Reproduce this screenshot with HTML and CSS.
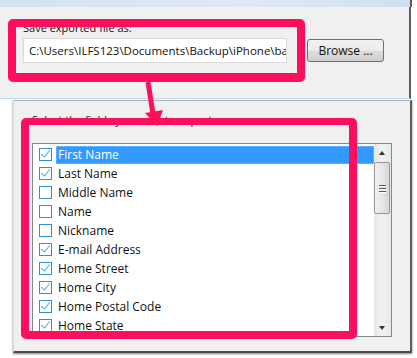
FILE: index.html
```html
<!DOCTYPE html>
<html lang="en">
<head>
  <meta charset="UTF-8">
  <title>Export Contacts</title>
  <link rel="stylesheet" href="styles.css">
</head>
<body>
  <div id="shot">
    <div class="topbar"></div>
    <div class="panel-top">
      <div class="label">Save exported file as:</div>
      <div class="file-row">
        <div class="path-box">C:\Users\ILFS123\Documents\Backup\iPhone\ba</div>
        <button type="button" class="browse">Browse ...</button>
      </div>
    </div>
    <div class="panel-bottom">
      <div class="label">Select the fields you want to export:</div>
      <div class="listbox">
        <div class="items">
          <div class="item selected"><span class="check on"></span><span class="text">First Name</span></div>
          <div class="item"><span class="check on"></span><span class="text">Last Name</span></div>
          <div class="item"><span class="check"></span><span class="text">Middle Name</span></div>
          <div class="item"><span class="check"></span><span class="text">Name</span></div>
          <div class="item"><span class="check"></span><span class="text">Nickname</span></div>
          <div class="item"><span class="check on"></span><span class="text">E-mail Address</span></div>
          <div class="item"><span class="check on"></span><span class="text">Home Street</span></div>
          <div class="item"><span class="check on"></span><span class="text">Home City</span></div>
          <div class="item"><span class="check on"></span><span class="text">Home Postal Code</span></div>
          <div class="item"><span class="check on"></span><span class="text">Home State</span></div>
        </div>
        <div class="scrollbar">
          <div class="arrow up"></div>
          <div class="thumb"><span></span><span></span><span></span></div>
          <div class="track"></div>
          <div class="arrow down"></div>
        </div>
      </div>
    </div>

    <!-- annotation marks drawn over the dialog -->
    <div class="mark mark-file"></div>
    <div class="mark mark-list"></div>
    <svg class="pointer" width="40" height="60" viewBox="0 0 40 60">
      <path d="M8 2 L13 34" stroke="#fe0f5b" stroke-width="5" fill="none"/>
      <path d="M5 33 L23 30 L17 46 Z" fill="#fe0f5b"/>
    </svg>
  </div>
</body>
</html>
```

FILE: styles.css
```css
body
{
  margin:0;
  background-color:#fff;
  font-family:"Open Sans",Arial,sans-serif;
  font-size:12px;
  color:#111;
}
#shot
{
  position:relative;
  width:417px;
  height:358px;
  overflow:hidden;
}
.topbar
{
  width:410px;
  height:7px;
  background:linear-gradient(90deg,#d3e1f0,#dfe9f5 60%,#d0dff0);
  border-right:2px solid #5c5c5c;
}
.panel-top
{
  width:386px;
  height:78px;
  padding:13px 0 0 23px;
  background-color:#f0f0f0;
  border-right:2px solid #5c5c5c;
  border-bottom:1px solid #c6d7ea;
}
.label
{
  font-size:11px;
  line-height:16px;
  height:16px;
}
.file-row
{
  display:flex;
  align-items:center;
  margin-top:2px;
}
.path-box
{
  width:254px;
  height:23px;
  line-height:23px;
  padding:0 3px 0 5px;
  background-color:#fff;
  border:1px solid #dadada;
  white-space:nowrap;
  overflow:hidden;
  font-size:11.5px;
}
.browse
{
  margin-left:20px;
  width:77px;
  height:23px;
  padding:0;
  font-family:"Open Sans",Arial,sans-serif;
  font-size:12px;
  color:#111;
  border:1px solid #707070;
  border-radius:3px;
  background:linear-gradient(#f2f2f2,#ebebeb 50%,#dddddd 51%,#cfcfcf);
}
.panel-bottom
{
  margin-top:1px;
  margin-left:13px;
  width:378px;
  height:239px;
  padding:11px 0 0 18px;
  background-color:#f0f0f0;
  border-top:1px solid #a9b4c2;
  border-left:1px solid #dcdcdc;
  border-right:2px solid #5c5c5c;
  border-bottom:2px solid #4a4a4a;
  box-shadow:0 1px 2px rgba(0,0,0,0.5);
}
.panel-bottom .label
{
  margin-bottom:15px;
}
.listbox
{
  display:flex;
  width:358px;
  height:192px;
  border:1px solid #828790;
  background-color:#fff;
}
.items
{
  flex:1;
  padding-top:1px;
}
.item
{
  display:flex;
  align-items:center;
  height:19px;
  padding-left:6px;
}
.check
{
  width:11px;
  height:11px;
  border:1px solid #2f8fd8;
  background-color:#fff;
  position:relative;
}
.check.on::after
{
  content:"";
  position:absolute;
  left:3px;
  top:-1px;
  width:4px;
  height:8px;
  border-right:1.5px solid #4aa6e8;
  border-bottom:1.5px solid #4aa6e8;
  transform:rotate(38deg);
}
.text
{
  margin-left:4px;
  padding:0 2px 0 2px;
  line-height:18px;
}
.selected .text
{
  flex:1;
  color:#fff;
  background-color:#3399ff;
  outline:1px dotted #e0b070;
  outline-offset:-1px;
}
.scrollbar
{
  width:17px;
  display:flex;
  flex-direction:column;
  background:linear-gradient(90deg,#e6e6e6,#f2f2f2 40%,#e8e8e8);
}
.arrow
{
  height:17px;
  position:relative;
}
.arrow::after
{
  content:"";
  position:absolute;
  left:5px;
  width:0;
  height:0;
  border-left:3.5px solid transparent;
  border-right:3.5px solid transparent;
}
.arrow.up::after
{
  top:7px;
  border-bottom:4px solid #333;
}
.arrow.down::after
{
  top:7px;
  border-top:4px solid #333;
}
.thumb
{
  height:50px;
  margin:1px 1px 0 0;
  border:1px solid #979797;
  border-radius:2px;
  background:linear-gradient(90deg,#f0f0f0,#e7e7e7 50%,#d6d6d6);
  display:flex;
  flex-direction:column;
  align-items:center;
  justify-content:center;
  gap:2px;
}
.thumb span
{
  width:7px;
  height:1px;
  background-color:#555;
  box-shadow:0 1px 0 #fff;
}
.track
{
  flex:1;
}
.mark
{
  position:absolute;
  border:8px solid #fe0f5b;
  border-radius:5px;
}
.mark-file
{
  left:8px;
  top:19px;
  width:281px;
  height:46px;
  border-bottom-width:9px;
}
.mark-list
{
  left:21px;
  top:118px;
  width:320px;
  height:206px;
  border-top-width:7px;
}
.pointer
{
  position:absolute;
  left:140px;
  top:80px;
}
```
